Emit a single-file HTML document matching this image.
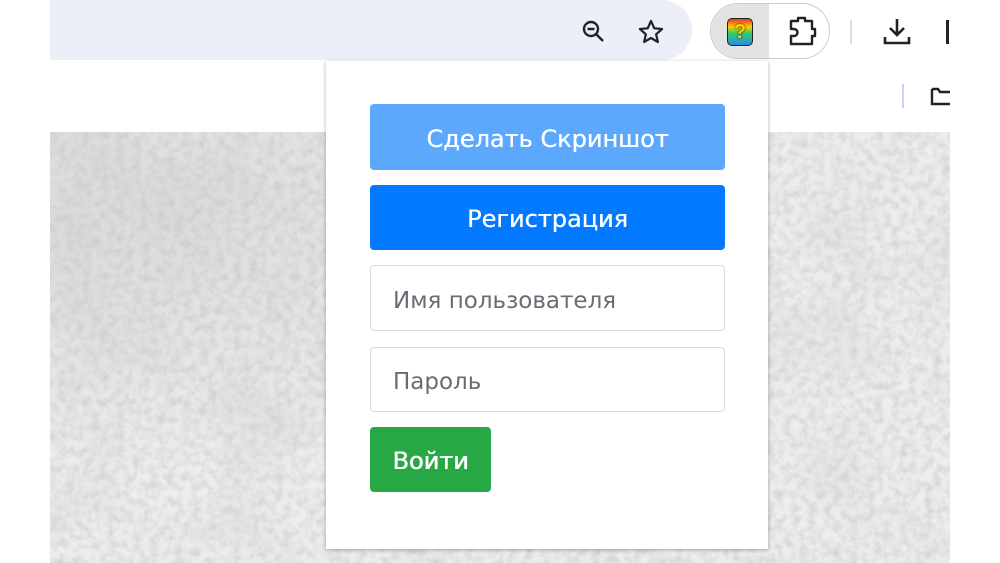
<!DOCTYPE html>
<html><head><meta charset="utf-8"><style>
body{margin:0;width:1000px;height:563px;background:#fff;position:relative;overflow:hidden;font-family:"Liberation Sans","DejaVu Sans",sans-serif}
.abs{position:absolute}
.btn{position:absolute;left:370px;width:355px;border-radius:4px;color:#fff;font-size:24px;text-align:center;font-family:"DejaVu Sans","Liberation Sans",sans-serif;text-shadow:0.4px 0 0 #fff}
.inp{position:absolute;left:370px;width:355px;height:64px;border:1.5px solid #d8dce0;border-radius:4px;color:#666d74;font-size:23px;line-height:64px;box-sizing:border-box;padding-left:22px;font-family:"DejaVu Sans","Liberation Sans",sans-serif}
</style></head><body>
<div class="abs" style="left:50px;top:0;width:642px;height:60px;background:#eceff8;border-radius:0 30px 30px 0"></div>
<svg class="abs" style="left:50px;top:132px" width="900" height="431">
<filter id="n"><feTurbulence type="fractalNoise" baseFrequency="0.12" numOctaves="4" seed="4"/><feColorMatrix type="matrix" values="0 0 0 0 0.65 0 0 0 0 0.65 0 0 0 0 0.65 0 0 0 -1.8 1.15"/></filter>
<filter id="m"><feTurbulence type="fractalNoise" baseFrequency="0.012" numOctaves="2" seed="9"/><feColorMatrix type="matrix" values="0 0 0 0 0.7 0 0 0 0 0.7 0 0 0 0 0.7 0 0 0 -2 1.1"/></filter>
<radialGradient id="g" cx="0.1" cy="0.2" r="0.6"><stop offset="0" stop-color="#bbb" stop-opacity="0.35"/><stop offset="1" stop-color="#bbb" stop-opacity="0"/></radialGradient>
<rect width="900" height="431" fill="#ededed"/>
<rect width="900" height="431" filter="url(#m)" opacity="0.6"/>
<rect width="900" height="431" filter="url(#n)"/>
<rect width="900" height="431" fill="url(#g)"/>
</svg>
<svg class="abs" style="left:580px;top:18px" width="26" height="26" viewBox="0 0 26 26" fill="none" stroke="#222" stroke-width="2.4"><circle cx="11" cy="11" r="7"/><path d="M16 16l7 7M7.5 11h7"/></svg>
<svg class="abs" style="left:637px;top:19px" width="28" height="26" viewBox="0 0 28 26" fill="none" stroke="#222" stroke-width="2.2" stroke-linejoin="round"><path d="M14 2l3.3 7.3 7.8.7-6 5.3 1.8 7.7L14 19l-6.9 4 1.8-7.7-6-5.3 7.8-.7z"/></svg>
<div class="abs" style="left:710px;top:3px;width:120px;height:56px;border:1px solid #ccc;border-radius:28px;box-sizing:border-box"></div>
<div class="abs" style="left:711px;top:4px;width:58px;height:54px;background:#e3e3e3;border-radius:27px 0 0 27px"></div>
<div class="abs" style="left:727px;top:18px;width:26px;height:28px;border-radius:5px;background:linear-gradient(180deg,#e33 0%,#fc0 30%,#3c6 55%,#2a8cf0 100%);border:1.5px solid #222;box-sizing:border-box;color:#fc0;font-weight:bold;font-size:20px;text-align:center;line-height:26px;text-shadow:0 0 2px #000">?</div>
<svg class="abs" style="left:787px;top:15px" width="34" height="32" viewBox="0 0 34 32" fill="none" stroke="#222" stroke-width="2.4" stroke-linejoin="round"><path d="M4 6h7V3h7v3h7v8h3v7h-3v8H4v-8h3a3 3 0 0 0 0-7H4z"/></svg>
<div class="abs" style="left:850px;top:20px;width:2px;height:24px;background:#d4dcee"></div>
<svg class="abs" style="left:882px;top:16px" width="30" height="30" viewBox="0 0 30 30" fill="none" stroke="#222" stroke-width="2.6"><path d="M15 3v16M8 12l7 7 7-7M3 21v6h24v-6"/></svg>
<div class="abs" style="left:946px;top:20px;width:3px;height:24px;background:#222"></div>
<div class="abs" style="left:902px;top:84px;width:2px;height:24px;background:#c5d4ef"></div>
<svg class="abs" style="left:930px;top:86px" width="20" height="20" viewBox="0 0 20 20" fill="none" stroke="#222" stroke-width="2.4"><path d="M2 3h6l2 3h12M2 3v15h20"/></svg>
<div class="abs" style="left:326px;top:61px;width:442px;height:488px;background:#fff;box-shadow:0 1px 4px rgba(0,0,0,.3)"></div>
<div class="btn" style="top:104px;height:66px;line-height:70px;background:#5ba8fd">Сделать Скриншот</div>
<div class="btn" style="top:185px;height:65px;line-height:69px;background:#0279fe">Регистрация</div>
<div class="inp" style="top:265px;height:66px;line-height:70px">Имя пользователя</div>
<div class="inp" style="top:347px;height:65px;line-height:69px">Пароль</div>
<div class="btn" style="top:427px;width:121px;height:65px;line-height:69px;background:#28a745;font-size:24px;text-shadow:0.6px 0 0 #fff">Войти</div>
</body></html>
